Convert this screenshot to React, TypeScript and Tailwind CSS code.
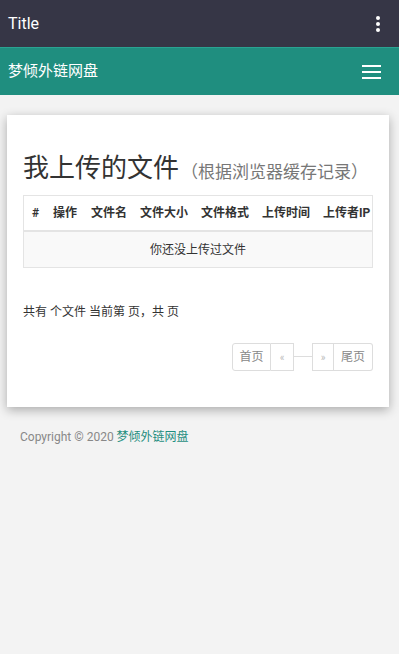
import React from "react";

const font = { fontFamily: '"Roboto", "Noto Sans CJK SC", sans-serif' };

export default function App() {
  return (
    <div className="w-[399px] h-[654px] bg-[#f3f3f3] overflow-hidden" style={font}>
      {/* status/title bar */}
      <div className="h-[47px] bg-[#363646] flex items-center justify-between pl-[8px] pr-[19px]">
        <span className="text-white text-[16px] leading-none">Title</span>
        <div className="flex flex-col gap-[2px]">
          <span className="block w-[4px] h-[4px] rounded-full bg-white" />
          <span className="block w-[4px] h-[4px] rounded-full bg-white" />
          <span className="block w-[4px] h-[4px] rounded-full bg-white" />
        </div>
      </div>
      {/* teal navbar */}
      <div className="h-[48px] bg-[#1f8e7f] border-t border-[#2aa392] flex items-center justify-between pl-[8px] pr-[18px]">
        <span className="text-white text-[15px] leading-none">梦倾外链网盘</span>
        <div className="flex flex-col gap-[4px]">
          <span className="block w-[19px] h-[2px] bg-white" />
          <span className="block w-[19px] h-[2px] bg-white" />
          <span className="block w-[19px] h-[2px] bg-white" />
        </div>
      </div>
      {/* card */}
      <div className="mt-[20px] mx-[7px] w-[382px] h-[292px] bg-white shadow-[0_3px_10px_rgba(0,0,0,0.3)] px-[16px] pt-[34px]">
        <div className="flex items-end whitespace-nowrap">
          <span className="text-[26px] leading-[38px] text-[#333]">我上传的文件</span>
          <span className="ml-[2px] text-[17px] leading-[30px] text-[#777]">（根据浏览器缓存记录）</span>
        </div>
        <div className="mt-[8px] w-[350px] border border-[#e4e4e4]">
          <div className="h-[36px] flex items-center text-[12px] font-bold text-[#333] border-b-2 border-[#e4e4e4] whitespace-nowrap">
            <span className="ml-[8px] w-[21px]">#</span>
            <span className="w-[38px]">操作</span>
            <span className="w-[49px]">文件名</span>
            <span className="w-[61px]">文件大小</span>
            <span className="w-[61px]">文件格式</span>
            <span className="w-[61px]">上传时间</span>
            <span>上传者IP</span>
          </div>
          <div className="h-[35px] bg-[#f9f9f9] flex items-center justify-center text-[12px] text-[#333]">
            你还没上传过文件
          </div>
        </div>
        <div className="mt-[35px] text-[12px] text-[#333] leading-[18px]">共有 个文件 当前第 页，共 页</div>
        <div className="mt-[22px] flex justify-end">
          <div className="flex items-start text-[12px] text-[#999]">
            <span className="h-[28px] w-[39px] border border-[#ddd] rounded-l-[3px] flex items-center justify-center text-[#888]">首页</span>
            <span className="h-[28px] w-[23px] border border-l-0 border-[#ddd] flex items-center justify-center text-[#bbb] text-[10px]">«</span>
            <span className="h-[13px] w-[18px] border-t border-[#ddd] mt-[13px]" />
            <span className="h-[28px] w-[22px] border border-[#ddd] flex items-center justify-center text-[#bbb] text-[10px]">»</span>
            <span className="h-[28px] w-[39px] border border-l-0 border-[#ddd] rounded-r-[3px] flex items-center justify-center text-[#888]">尾页</span>
          </div>
        </div>
      </div>
      <div className="mt-[21px] pl-[20px] text-[12px] text-[#888]">
        Copyright © 2020 <span className="text-[#1f8e7f]">梦倾外链网盘</span>
      </div>
    </div>
  );
}
